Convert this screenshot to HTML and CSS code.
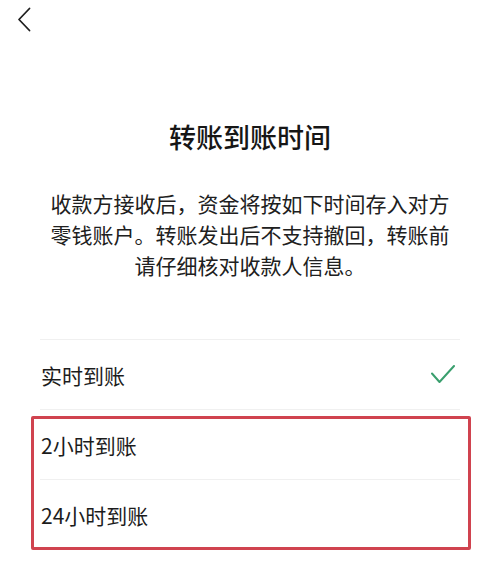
FILE: index.html
```html
<!DOCTYPE html>
<html lang="zh-CN">
<head>
<meta charset="utf-8">
<link rel="stylesheet" href="styles.css">
</head>
<body>
<div class="page">
  <header class="topbar">
    <svg class="back" width="14" height="26" viewBox="0 0 14 26">
      <polyline points="12.5,1.5 2,12.5 12.5,23.5" fill="none" stroke="#1f1f1f" stroke-width="1.8" stroke-linecap="round" stroke-linejoin="round"/>
    </svg>
  </header>
  <h1 class="title">转账到账时间</h1>
  <p class="desc">收款方接收后，资金将按如下时间存入对方<br>零钱账户。转账发出后不支持撤回，转账前<br>请仔细核对收款人信息。</p>
  <div class="list">
    <div class="row">
      <span class="label">实时到账</span>
      <svg class="check" width="24" height="20" viewBox="0 0 24 20">
        <polyline points="1,8.5 8.5,17 23,1" fill="none" stroke="#3a9f6e" stroke-width="2" stroke-linecap="round" stroke-linejoin="round"/>
      </svg>
    </div>
    <div class="row"><span class="label">2小时到账</span></div>
    <div class="row"><span class="label">24小时到账</span></div>
    <div class="highlight"></div>
  </div>
</div>
</body>
</html>
```

FILE: styles.css
```css
html, body {
  margin: 0;
  padding: 0;
  background: #ffffff;
}

body {
  font-family: "Noto Sans CJK SC", "Noto Sans", sans-serif;
  color: #1c1c1c;
}

.page {
  width: 500px;
  height: 588px;
  overflow: hidden;
}

.topbar {
  height: 40px;
  padding: 7px 0 0 17px;
  box-sizing: border-box;
}

.back {
  display: block;
}

.title {
  margin: 79px 0 0;
  font-size: 27px;
  line-height: 36px;
  font-weight: 500;
  text-align: center;
  color: #161616;
}

.desc {
  margin: 33px 0 0;
  padding: 0 20px;
  font-size: 21px;
  line-height: 31px;
  text-align: center;
  color: #202020;
}

.list {
  position: relative;
  margin: 58px 40px 0;
}

.row {
  display: flex;
  align-items: center;
  justify-content: space-between;
  height: 69px;
  border-top: 1px solid #f0f0f0;
  padding-left: 1px;
}

.label {
  font-size: 21px;
  line-height: 30px;
  color: #1c1c1c;
}

.check {
  display: block;
  margin-right: 5px;
}

.highlight {
  position: absolute;
  top: 77px;
  left: -9px;
  width: 440px;
  height: 134px;
  box-sizing: border-box;
  border: 3px solid #d0434f;
  border-radius: 2px;
}
```
